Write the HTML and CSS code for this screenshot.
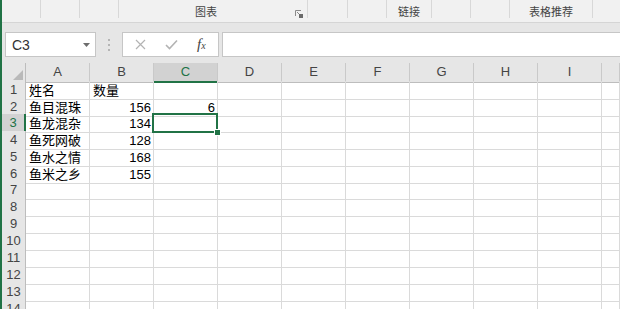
FILE: index.html
```html
<!DOCTYPE html>
<html>
<head>
    <title>工作表</title>
    <link rel="stylesheet" href="styles.css">
</head>
<body>
<div class="app">

    <!-- ribbon, only the group labels are visible -->
    <div class="ribbon">
        <div class="group g39"></div>
        <div class="group g39"></div>
        <div class="group g39"></div>
        <div class="group chart">
            <span class="label">图表</span>
            <svg class="launcher" width="8" height="8" viewBox="0 0 8 8">
                <path d="M0.5 6V0.5H6" fill="none" stroke="#8a8a8a"/>
                <path d="M2 2L6 6" stroke="#8a8a8a"/>
                <rect x="4" y="4" width="4" height="4" fill="#6a6a6a"/>
            </svg>
        </div>
        <div class="group g40"></div>
        <div class="group g39"></div>
        <div class="group link"><span class="label">链接</span></div>
        <div class="group g39"></div>
        <div class="group g39"></div>
        <div class="group recommend"><span class="label">表格推荐</span></div>
        <div class="group last"></div>
    </div>

    <!-- name box + formula bar -->
    <div class="formula-bar">
        <div class="name-box">
            <span>C3</span>
            <svg width="7" height="4" viewBox="0 0 7 4"><path d="M0 0H7L3.5 4Z" fill="#6d6d6d"/></svg>
        </div>
        <div class="grip">
            <svg width="2" height="12" viewBox="0 0 2 12">
                <rect x="0" y="0" width="2" height="2" fill="#b5b5b5"/>
                <rect x="0" y="5" width="2" height="2" fill="#b5b5b5"/>
                <rect x="0" y="10" width="2" height="2" fill="#b5b5b5"/>
            </svg>
        </div>
        <div class="fx-buttons">
            <svg class="btn" width="11" height="11" viewBox="0 0 11 11">
                <path d="M1 1L10 10M10 1L1 10" stroke="#b3b3b3" stroke-width="1.2"/>
            </svg>
            <svg class="btn" width="13" height="11" viewBox="0 0 13 11">
                <path d="M1 6L4.5 9.5L12 1.5" fill="none" stroke="#b3b3b3" stroke-width="1.6"/>
            </svg>
            <span class="fx">f<small>x</small></span>
        </div>
        <div class="formula-input"></div>
    </div>

    <!-- grid -->
    <div class="sheet">
        <div class="row head">
            <div class="corner">
                <svg width="10" height="10" viewBox="0 0 10 10"><path d="M10 0V10H0Z" fill="#b9b9b9"/></svg>
            </div>
            <div class="col">A</div>
            <div class="col">B</div>
            <div class="col sel">C</div>
            <div class="col">D</div>
            <div class="col">E</div>
            <div class="col">F</div>
            <div class="col">G</div>
            <div class="col">H</div>
            <div class="col">I</div>
            <div class="col"></div>
        </div>
        <div class="row">
            <div class="num">1</div>
            <div class="cell">姓名</div><div class="cell">数量</div><div class="cell"></div>
            <div class="cell"></div><div class="cell"></div><div class="cell"></div><div class="cell"></div><div class="cell"></div><div class="cell"></div><div class="cell"></div>
        </div>
        <div class="row short">
            <div class="num">2</div>
            <div class="cell">鱼目混珠</div><div class="cell right">156</div><div class="cell right">6</div>
            <div class="cell"></div><div class="cell"></div><div class="cell"></div><div class="cell"></div><div class="cell"></div><div class="cell"></div><div class="cell"></div>
        </div>
        <div class="row">
            <div class="num sel">3</div>
            <div class="cell">鱼龙混杂</div><div class="cell right">134</div><div class="cell active"></div>
            <div class="cell"></div><div class="cell"></div><div class="cell"></div><div class="cell"></div><div class="cell"></div><div class="cell"></div><div class="cell"></div>
        </div>
        <div class="row">
            <div class="num">4</div>
            <div class="cell">鱼死网破</div><div class="cell right">128</div><div class="cell"></div>
            <div class="cell"></div><div class="cell"></div><div class="cell"></div><div class="cell"></div><div class="cell"></div><div class="cell"></div><div class="cell"></div>
        </div>
        <div class="row">
            <div class="num">5</div>
            <div class="cell">鱼水之情</div><div class="cell right">168</div><div class="cell"></div>
            <div class="cell"></div><div class="cell"></div><div class="cell"></div><div class="cell"></div><div class="cell"></div><div class="cell"></div><div class="cell"></div>
        </div>
        <div class="row short">
            <div class="num">6</div>
            <div class="cell">鱼米之乡</div><div class="cell right">155</div><div class="cell"></div>
            <div class="cell"></div><div class="cell"></div><div class="cell"></div><div class="cell"></div><div class="cell"></div><div class="cell"></div><div class="cell"></div>
        </div>
        <div class="row"><div class="num">7</div><div class="cell"></div><div class="cell"></div><div class="cell"></div><div class="cell"></div><div class="cell"></div><div class="cell"></div><div class="cell"></div><div class="cell"></div><div class="cell"></div><div class="cell"></div></div>
        <div class="row"><div class="num">8</div><div class="cell"></div><div class="cell"></div><div class="cell"></div><div class="cell"></div><div class="cell"></div><div class="cell"></div><div class="cell"></div><div class="cell"></div><div class="cell"></div><div class="cell"></div></div>
        <div class="row"><div class="num">9</div><div class="cell"></div><div class="cell"></div><div class="cell"></div><div class="cell"></div><div class="cell"></div><div class="cell"></div><div class="cell"></div><div class="cell"></div><div class="cell"></div><div class="cell"></div></div>
        <div class="row"><div class="num">10</div><div class="cell"></div><div class="cell"></div><div class="cell"></div><div class="cell"></div><div class="cell"></div><div class="cell"></div><div class="cell"></div><div class="cell"></div><div class="cell"></div><div class="cell"></div></div>
        <div class="row"><div class="num">11</div><div class="cell"></div><div class="cell"></div><div class="cell"></div><div class="cell"></div><div class="cell"></div><div class="cell"></div><div class="cell"></div><div class="cell"></div><div class="cell"></div><div class="cell"></div></div>
        <div class="row"><div class="num">12</div><div class="cell"></div><div class="cell"></div><div class="cell"></div><div class="cell"></div><div class="cell"></div><div class="cell"></div><div class="cell"></div><div class="cell"></div><div class="cell"></div><div class="cell"></div></div>
        <div class="row"><div class="num">13</div><div class="cell"></div><div class="cell"></div><div class="cell"></div><div class="cell"></div><div class="cell"></div><div class="cell"></div><div class="cell"></div><div class="cell"></div><div class="cell"></div><div class="cell"></div></div>
        <div class="row"><div class="num">14</div><div class="cell"></div><div class="cell"></div><div class="cell"></div><div class="cell"></div><div class="cell"></div><div class="cell"></div><div class="cell"></div><div class="cell"></div><div class="cell"></div><div class="cell"></div></div>
    </div>

</div>
</body>
</html>
```

FILE: styles.css
```css
body{
    margin:0;
    overflow:hidden;
    font-family:"Liberation Sans", "Noto Sans CJK SC", sans-serif;
    color:#000;
}
.app{
    width:618px;
    height:309px;
    border-left:2px solid #217346;
    overflow:hidden;
}

/* ribbon */
.ribbon{
    display:flex;
    height:22px;
    background:#f1f1f1;
    border-bottom:1px solid #d5d5d5;
}
.group{
    position:relative;
    height:18px;
    box-sizing:border-box;
    border-right:1px solid #d8d8d8;
    display:flex;
    align-items:flex-end;
    justify-content:center;
    font-size:11px;
    color:#444;
}
.group .label{line-height:11px;}
.g39{width:39px;}
.g40{width:40px;}
.chart{width:189px;padding-right:14px;}
.link{width:45px;}
.recommend{width:83px;}
.last{flex:1;border-right:none;}
.launcher{
    position:absolute;
    right:4px;
    bottom:0;
}

/* formula bar */
.formula-bar{
    display:flex;
    align-items:flex-start;
    height:40px;
    box-sizing:border-box;
    padding-top:9px;
    background:#e6e6e6;
}
.name-box{
    width:91px;
    height:25px;
    box-sizing:border-box;
    margin-left:3px;
    border:1px solid #c6c6c6;
    background:#fff;
    display:flex;
    align-items:center;
    justify-content:space-between;
    padding:0 5px 0 6px;
    font-size:14px;
    color:#333;
}
.grip{
    width:26px;
    height:25px;
    display:flex;
    align-items:center;
    justify-content:center;
}
.fx-buttons{
    width:97px;
    height:25px;
    box-sizing:border-box;
    border:1px solid #c6c6c6;
    background:#fff;
    display:flex;
    align-items:center;
    padding-left:12px;
    gap:19px;
}
.fx{
    font-family:"Liberation Serif", serif;
    font-style:italic;
    font-size:15px;
    color:#444;
}
.fx small{font-size:10px;}
.formula-input{
    flex:1;
    height:25px;
    box-sizing:border-box;
    margin-left:3px;
    border:1px solid #c6c6c6;
    border-right:none;
    background:#fff;
}

/* sheet */
.row{
    display:grid;
    grid-template-columns:24px repeat(9, 64px) 1fr;
    height:17px;
}
.row.short{height:16px;}
.row.head{height:18px;}
.row > div{
    box-sizing:border-box;
    border-right:1px solid #dadada;
    border-bottom:1px solid #dadada;
    font-size:13px;
    white-space:nowrap;
}
.corner, .col, .num{
    background:#e6e6e6;
    color:#444;
}
.corner{
    display:flex;
    align-items:flex-end;
    justify-content:flex-end;
    padding:0 2px 2px 0;
    border-bottom-color:#bdbdbd !important;
    border-right-color:#bdbdbd !important;
}
.col{
    text-align:center;
    line-height:18px;
    border-right-color:#c9c9c9 !important;
    border-bottom-color:#bdbdbd !important;
}
.col.sel{
    background:#d2d2d2;
    color:#217346;
    border-bottom:2px solid #217346 !important;
}
.num{
    text-align:center;
    line-height:18px;
    border-right-color:#bdbdbd !important;
    border-bottom-color:#d0d0d0 !important;
}
.num.sel{
    background:#d2d2d2;
    color:#217346;
    border-right:2px solid #217346 !important;
}
.cell{
    padding:2px 2px 0 3px;
    line-height:15px;
}
.cell.right{text-align:right;}
.cell.active{position:relative;}
.cell.active::after{
    content:"";
    position:absolute;
    left:-2px;
    top:-1px;
    right:-1px;
    bottom:-1px;
    border:2px solid #217346;
}
.cell.active::before{
    content:"";
    position:absolute;
    right:-4px;
    bottom:-4px;
    width:5px;
    height:5px;
    background:#217346;
    border:1px solid #fff;
    z-index:1;
}
```
